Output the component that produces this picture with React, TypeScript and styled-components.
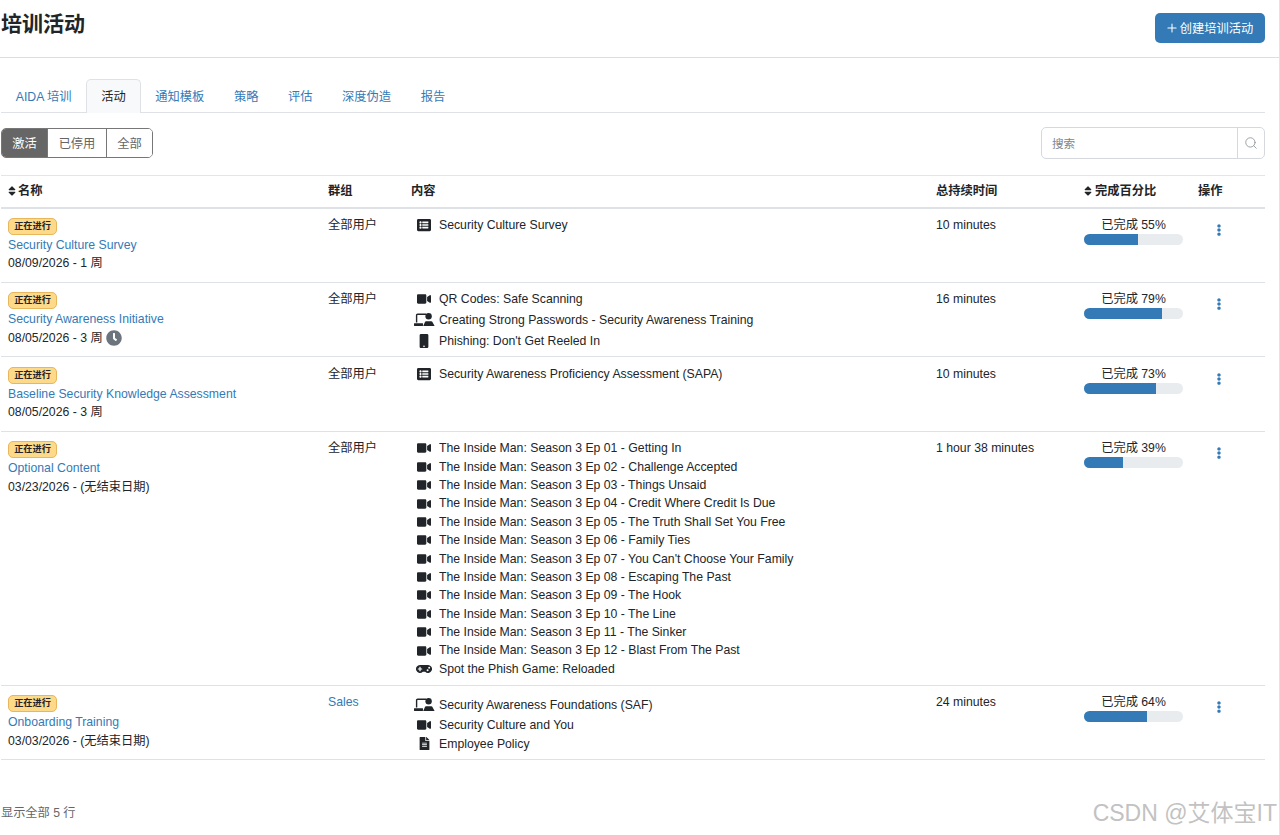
import React from 'react'
import styled, { createGlobalStyle } from 'styled-components'
import { FaClock, FaEllipsisV, FaFileAlt, FaGamepad, FaListAlt, FaMobile, FaSort, FaVideo } from 'react-icons/fa'
import { Plus, Search as SearchIcon } from 'lucide-react'

const FONT = `'Liberation Sans', 'Noto Sans CJK SC', sans-serif`

const GlobalStyle = createGlobalStyle`
  html, body {
    margin: 0;
    background: #fff;
  }
  body {
    font-family: ${FONT};
    font-size: 12.25px;
    line-height: 18.4px;
    color: #212529;
  }
`

const Page = styled.div`
  position: relative;
  width: 1279px;
  height: 835px;
  overflow: hidden;
  background: #fff;
  border-right: 1px solid #e3e3e3;
`

const Header = styled.header`
  display: flex;
  justify-content: space-between;
  align-items: flex-start;
  height: 58px;
  box-sizing: border-box;
  padding: 13px 14px 0 1px;
  border-bottom: 1px solid #dcdfe2;
`

const Title = styled.h1`
  margin: -1px 0 0;
  font-size: 21px;
  line-height: 24px;
  font-weight: 600;
  color: #212529;
`

const CreateButton = styled.button`
  display: flex;
  align-items: center;
  justify-content: center;
  gap: 1px;
  width: 110px;
  height: 30px;
  padding: 0 2px 0 0;
  border: 0;
  border-radius: 5px;
  background: #337ab7;
  color: #fff;
  font-family: ${FONT};
  font-size: 12.25px;
`

const Content = styled.main`
  padding: 21px 14px 0 1px;
`

const Tabs = styled.nav`
  display: flex;
  height: 34px;
  box-sizing: border-box;
  border-bottom: 1px solid #dee2e6;
`

const Tab = styled.a<{ $active?: boolean }>`
  box-sizing: border-box;
  height: 34px;
  padding: 8px 13.8px 0;
  font-size: 12.25px;
  color: ${(p) => (p.$active ? '#212529' : '#337ab7')};
  background: ${(p) => (p.$active ? '#f8f9fa' : 'transparent')};
  border: 1px solid ${(p) => (p.$active ? '#dee2e6' : 'transparent')};
  border-bottom: 0;
  border-radius: 5px 5px 0 0;
`

const Toolbar = styled.div`
  display: flex;
  justify-content: space-between;
  align-items: flex-start;
  margin-top: 14px;
  height: 48px;
`

const Segments = styled.div`
  display: flex;
  margin-top: 1px;
  height: 30px;
  box-sizing: border-box;
  border: 1px solid #777;
  border-radius: 5px;
  overflow: hidden;
`

const Segment = styled.button<{ $active?: boolean; $width: number }>`
  width: ${(p) => p.$width}px;
  padding: 0;
  border: 0;
  border-left: 1px solid #777;
  &:first-child {
    border-left: 0;
  }
  background: ${(p) => (p.$active ? '#666' : '#fff')};
  color: ${(p) => (p.$active ? '#fff' : '#666')};
  font-family: ${FONT};
  font-size: 12.25px;
`

const Search = styled.div`
  display: flex;
  width: 224px;
  height: 32px;
  box-sizing: border-box;
  border: 1px solid #d5d9dd;
  border-radius: 5px;
`

const SearchInput = styled.div`
  flex: 1;
  padding: 7px 10px;
  font-size: 11.6px;
  color: #80868b;
`

const SearchButton = styled.div`
  display: flex;
  align-items: center;
  justify-content: center;
  width: 26px;
  border-left: 1px solid #d5d9dd;
  color: #8f969c;
`

const Table = styled.table`
  width: 1264px;
  table-layout: fixed;
  border-collapse: collapse;
`

const HeadCell = styled.th`
  height: 32px;
  box-sizing: border-box;
  padding: 0 8px 0 7px;
  text-align: left;
  font-size: 12.25px;
  font-weight: 700;
  color: #212529;
  border-top: 1px solid #e2e6ea;
  border-bottom: 2px solid #dee2e6;
  white-space: nowrap;

  svg {
    vertical-align: -2px;
    margin: 0 0.5px 0 -2.5px;
  }

  &:nth-child(5) {
    padding-left: 8px;
  }

  &:nth-child(5) svg {
    margin-right: 1.5px;
  }
`

const Row = styled.tr`
  border-bottom: 1px solid #dee2e6;
`

const Cell = styled.td`
  padding: 7.6px 8px 6.4px 7px;
  vertical-align: top;
`

const Badge = styled.span`
  display: block;
  width: 49px;
  height: 17px;
  box-sizing: border-box;
  margin-top: 1.9px;
  border: 1px solid #e8b65c;
  border-radius: 5px;
  background: #fdd98a;
  color: #212529;
  font-size: 9.2px;
  font-weight: 700;
  line-height: 15px;
  text-align: center;
`

const NameLink = styled.a`
  display: block;
  margin-top: 1.1px;
  color: #337ab7;
  white-space: nowrap;
`

const DateLine = styled.div`
  display: flex;
  align-items: center;
  gap: 3px;
  height: 18.4px;
  padding-bottom: 2.4px;
  white-space: nowrap;
`

const GroupLink = styled.a`
  color: #337ab7;
`

const Items = styled.ul`
  margin: 0;
  padding: 0;
  list-style: none;
`

const Item = styled.li<{ $tall?: boolean }>`
  display: flex;
  align-items: center;
  height: ${(p) => (p.$tall ? 23 : 18.4)}px;
  white-space: nowrap;
`

const ItemIcon = styled.span`
  display: flex;
  align-items: center;
  justify-content: center;
  width: 26px;
  margin-right: 2px;
  color: #212529;
`

const ProgressWrap = styled.div`
  width: 99px;
  margin-left: 1px;
`

const ProgressLabel = styled.div`
  text-align: center;
  white-space: nowrap;
  height: 17.9px;
`

const ProgressTrack = styled.div`
  height: 11px;
  border-radius: 5.5px;
  background: #e9ecef;
  overflow: hidden;
`

const ProgressFill = styled.div`
  height: 100%;
  background: #337ab7;
`

const Actions = styled.div`
  display: flex;
  justify-content: center;
  width: 42px;
  padding-top: 7.9px;
  color: #337ab7;
`

const Footer = styled.div`
  position: absolute;
  left: 1px;
  top: 804px;
  font-size: 12.2px;
  color: #666;
`

const Watermark = styled.div`
  position: absolute;
  right: 2px;
  top: 798px;
  font-size: 23px;
  line-height: 30px;
  color: #c2c2c2;
  white-space: nowrap;
`

// board on the left, presenter on the right
const TeacherIcon = () => (
  <svg width="21" height="16" viewBox="0 0 21 16" fill="currentColor">
    <path d="M2.6 10.5V3.2a1 1 0 0 1 1-1H12" fill="none" stroke="currentColor" strokeWidth="1.4" />
    <rect x="0" y="11.2" width="9" height="2.8" rx="0.4" />
    <circle cx="14.6" cy="4.2" r="3.2" />
    <path d="M9.2 14l1.9-4.2a1 1 0 0 1 .9-.6h5.4a1 1 0 0 1 .9.6L20.6 14z" />
  </svg>
)

type Kind = 'list' | 'video' | 'teacher' | 'mobile' | 'game' | 'file'

const icons: Record<Kind, React.ReactNode> = {
  list: <FaListAlt size={14} />,
  video: <FaVideo size={14} />,
  teacher: <TeacherIcon />,
  mobile: <FaMobile size={14} />,
  game: <FaGamepad size={16} />,
  file: <FaFileAlt size={13} />,
}

interface Campaign {
  name: string
  date: string
  clock?: boolean
  group: string
  groupLink?: boolean
  items: [Kind, string][]
  duration: string
  percent: number
}

const insideMan = [
  'Getting In',
  'Challenge Accepted',
  'Things Unsaid',
  'Credit Where Credit Is Due',
  'The Truth Shall Set You Free',
  'Family Ties',
  "You Can't Choose Your Family",
  'Escaping The Past',
  'The Hook',
  'The Line',
  'The Sinker',
  'Blast From The Past',
].map((t, i): [Kind, string] => [
  'video',
  `The Inside Man: Season 3 Ep ${String(i + 1).padStart(2, '0')} - ${t}`,
])

const campaigns: Campaign[] = [
  {
    name: 'Security Culture Survey',
    date: '08/09/2026 - 1 周',
    group: '全部用户',
    items: [['list', 'Security Culture Survey']],
    duration: '10 minutes',
    percent: 55,
  },
  {
    name: 'Security Awareness Initiative',
    date: '08/05/2026 - 3 周',
    clock: true,
    group: '全部用户',
    items: [
      ['video', 'QR Codes: Safe Scanning'],
      ['teacher', 'Creating Strong Passwords - Security Awareness Training'],
      ['mobile', "Phishing: Don't Get Reeled In"],
    ],
    duration: '16 minutes',
    percent: 79,
  },
  {
    name: 'Baseline Security Knowledge Assessment',
    date: '08/05/2026 - 3 周',
    group: '全部用户',
    items: [['list', 'Security Awareness Proficiency Assessment (SAPA)']],
    duration: '10 minutes',
    percent: 73,
  },
  {
    name: 'Optional Content',
    date: '03/23/2026 - (无结束日期)',
    group: '全部用户',
    items: [...insideMan, ['game', 'Spot the Phish Game: Reloaded']],
    duration: '1 hour 38 minutes',
    percent: 39,
  },
  {
    name: 'Onboarding Training',
    date: '03/03/2026 - (无结束日期)',
    group: 'Sales',
    groupLink: true,
    items: [
      ['teacher', 'Security Awareness Foundations (SAF)'],
      ['video', 'Security Culture and You'],
      ['file', 'Employee Policy'],
    ],
    duration: '24 minutes',
    percent: 64,
  },
]

const tabs = ['AIDA 培训', '活动', '通知模板', '策略', '评估', '深度伪造', '报告']

export default function App() {
  return (
    <Page>
      <GlobalStyle />
      <Header>
        <Title>培训活动</Title>
        <CreateButton>
          <Plus size={14} strokeWidth={1.8} />
          创建培训活动
        </CreateButton>
      </Header>
      <Content>
        <Tabs>
          {tabs.map((t) => (
            <Tab key={t} $active={t === '活动'}>
              {t}
            </Tab>
          ))}
        </Tabs>
        <Toolbar>
          <Segments>
            <Segment $active $width={45}>
              激活
            </Segment>
            <Segment $width={59}>已停用</Segment>
            <Segment $width={46}>全部</Segment>
          </Segments>
          <Search>
            <SearchInput>搜索</SearchInput>
            <SearchButton>
              <SearchIcon size={14} strokeWidth={1.5} />
            </SearchButton>
          </Search>
        </Toolbar>
        <Table>
          <colgroup>
            <col width={320} />
            <col width={83} />
            <col width={525} />
            <col width={147} />
            <col width={115} />
            <col width={74} />
          </colgroup>
          <thead>
            <tr>
              <HeadCell>
                <FaSort size={12} />
                名称
              </HeadCell>
              <HeadCell>群组</HeadCell>
              <HeadCell>内容</HeadCell>
              <HeadCell>总持续时间</HeadCell>
              <HeadCell>
                <FaSort size={12} />
                完成百分比
              </HeadCell>
              <HeadCell>操作</HeadCell>
            </tr>
          </thead>
          <tbody>
            {campaigns.map((c) => (
              <Row key={c.name}>
                <Cell>
                  <Badge>正在进行</Badge>
                  <NameLink>{c.name}</NameLink>
                  <DateLine>
                    {c.date}
                    {c.clock && <FaClock size={16} color="#6c757d" />}
                  </DateLine>
                </Cell>
                <Cell>{c.groupLink ? <GroupLink>{c.group}</GroupLink> : c.group}</Cell>
                <Cell>
                  <Items>
                    {c.items.map(([kind, text]) => (
                      <Item key={text} $tall={kind === 'teacher'}>
                        <ItemIcon>{icons[kind]}</ItemIcon>
                        {text}
                      </Item>
                    ))}
                  </Items>
                </Cell>
                <Cell>{c.duration}</Cell>
                <Cell>
                  <ProgressWrap>
                    <ProgressLabel>已完成 {c.percent}%</ProgressLabel>
                    <ProgressTrack>
                      <ProgressFill style={{ width: `${c.percent}%` }} />
                    </ProgressTrack>
                  </ProgressWrap>
                </Cell>
                <Cell>
                  <Actions>
                    <FaEllipsisV size={12} />
                  </Actions>
                </Cell>
              </Row>
            ))}
          </tbody>
        </Table>
      </Content>
      <Footer>显示全部 5 行</Footer>
      <Watermark>CSDN @艾体宝IT</Watermark>
    </Page>
  )
}
